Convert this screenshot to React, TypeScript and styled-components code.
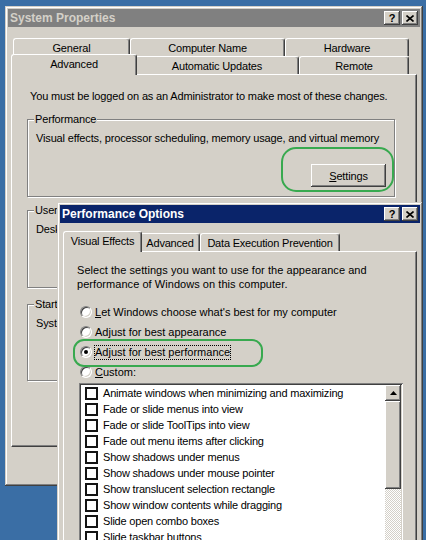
import React from 'react';
import styled, { createGlobalStyle, css } from 'styled-components';

const FACE = '#d4d0c8';
const SHADOW = '#808080';
const DARK = '#404040';
const MARK = '#38a94f';

const GlobalStyle = createGlobalStyle`
  html, body {
    margin: 0;
    padding: 0;
  }
  body {
    background: #3a6ea5;
    font-family: "Liberation Sans", Arial, sans-serif;
    font-size: 11px;
    color: #000;
  }
  * {
    box-sizing: border-box;
  }
`;

const raised = css`
  box-shadow: inset -1px -1px ${DARK}, inset 1px 1px #fff,
    inset -2px -2px ${SHADOW}, inset 2px 2px ${FACE};
`;

const Desktop = styled.div`
  position: relative;
  width: 426px;
  height: 540px;
  overflow: hidden;
  background: #3a6ea5;
`;

// windows sit at their place on the desktop
const Window = styled.div<{ $x: number; $y: number; $w: number; $h: number; $z: number; $ls: number }>`
  position: absolute;
  z-index: ${(p) => p.$z};
  left: ${(p) => p.$x}px;
  top: ${(p) => p.$y}px;
  width: ${(p) => p.$w}px;
  height: ${(p) => p.$h}px;
  padding: 3px;
  background: ${FACE};
  letter-spacing: ${(p) => p.$ls}px;
  box-shadow: inset -1px -1px ${DARK}, inset 1px 1px ${FACE},
    inset -2px -2px ${SHADOW}, inset 2px 2px #fff;
  display: flex;
  flex-direction: column;
`;

const TitleBar = styled.div<{ $active?: boolean }>`
  flex: none;
  height: 18px;
  display: flex;
  align-items: center;
  justify-content: space-between;
  padding: 0 2px;
  background: ${(p) => (p.$active ? '#0a246a' : SHADOW)};
  color: ${(p) => (p.$active ? '#fff' : FACE)};
  font-weight: bold;
  font-size: 12px;
  letter-spacing: 0;
  white-space: nowrap;
`;

const CaptionButtons = styled.div`
  display: flex;
  gap: 2px;
`;

const CaptionButton = styled.div`
  width: 16px;
  height: 14px;
  background: ${FACE};
  ${raised};
  display: flex;
  align-items: center;
  justify-content: center;
  color: #000;
  font-weight: bold;
  font-size: 11px;
  line-height: 1;
`;

const DialogBody = styled.div<{ $top: number }>`
  flex: 1;
  display: flex;
  flex-direction: column;
  padding: ${(p) => p.$top}px 3px 0;
`;

const TabRow = styled.div`
  flex: none;
  display: flex;
  height: 18px;
  padding-left: 2px;
`;

const Tab = styled.div<{ $w: number; $active?: boolean }>`
  flex: none;
  width: ${(p) => p.$w}px;
  height: 18px;
  background: ${FACE};
  border: 1px solid #fff;
  border-bottom: none;
  border-right-color: ${DARK};
  border-radius: 3px 3px 0 0;
  box-shadow: inset -1px 0 ${SHADOW};
  display: flex;
  align-items: center;
  justify-content: center;
  white-space: nowrap;
  ${(p) =>
    p.$active &&
    css`
      position: relative;
      z-index: 2;
      width: ${p.$w + 4}px;
      height: 21px;
      margin: -2px -2px -1px;
      padding-bottom: 3px;
    `}
`;

const TabPanel = styled.div<{ $h: number }>`
  flex: none;
  position: relative;
  z-index: 1;
  height: ${(p) => p.$h}px;
  background: ${FACE};
  border: 1px solid #fff;
  border-right-color: ${DARK};
  border-bottom-color: ${DARK};
  box-shadow: inset -1px -1px ${SHADOW};
`;

const AdvancedPage = styled.div`
  padding: 14px 21px 0 15px;
`;

const Notice = styled.p`
  margin: 0 0 0 3px;
  line-height: 14px;
  white-space: nowrap;
`;

const GroupBox = styled.fieldset<{ $mt: number }>`
  margin: ${(p) => p.$mt}px 0 0;
  padding: 0;
  min-width: 0;
  border: 1px solid ${SHADOW};
  box-shadow: inset 1px 1px #fff, 1px 1px #fff;
`;

const GroupTitle = styled.legend`
  margin-left: 6px;
  padding: 0 1px;
  line-height: 14px;
  background: ${FACE};
`;

const GroupContent = styled.div`
  padding: 5px 8px 9px 8px;
`;

const GroupText = styled.div`
  line-height: 14px;
  white-space: nowrap;
`;

const ButtonRow = styled.div<{ $mt: number }>`
  display: flex;
  justify-content: flex-end;
  gap: 6px;
  margin-top: ${(p) => p.$mt}px;
`;

const PushButton = styled.button`
  width: 75px;
  height: 23px;
  padding: 0;
  border: none;
  background: ${FACE};
  ${raised};
  font-family: inherit;
  font-size: 11px;
  letter-spacing: inherit;
  color: #000;
`;

const VisualPage = styled.div`
  padding: 11px 13px 0 13px;
`;

const Intro = styled.p`
  margin: 0;
  line-height: 14px;
  letter-spacing: 0.05px;
  white-space: nowrap;
`;

const RadioGroup = styled.div`
  margin-top: 11px;
`;

const RadioRow = styled.div`
  height: 20px;
  display: flex;
  align-items: center;
  gap: 2px;
  padding-left: 3px;
`;

const RadioDot = styled.span<{ $on?: boolean }>`
  flex: none;
  width: 12px;
  height: 12px;
  border-radius: 50%;
  background: #fff;
  border: 1px solid;
  border-color: ${SHADOW} #fff #fff ${SHADOW};
  box-shadow: inset 1px 1px ${DARK}, inset -1px -1px ${FACE};
  display: flex;
  align-items: center;
  justify-content: center;
  &::after {
    content: '';
    width: 4px;
    height: 4px;
    border-radius: 50%;
    background: ${(p) => (p.$on ? '#000' : 'transparent')};
  }
`;

const RadioLabel = styled.span<{ $focus?: boolean }>`
  padding: 1px;
  line-height: 13px;
  letter-spacing: 0;
  white-space: nowrap;
  outline: ${(p) => (p.$focus ? '1px dotted #000' : 'none')};
  outline-offset: -1px;
`;

const Key = styled.u`
  text-decoration: underline;
`;

const ListBox = styled.div`
  margin: 1px 0 0 2px;
  height: 200px;
  display: flex;
  padding: 2px;
  background: #fff;
  box-shadow: inset 1px 1px ${SHADOW}, inset -1px -1px #fff,
    inset 2px 2px ${DARK}, inset -2px -2px ${FACE};
`;

const ListItems = styled.div`
  flex: 1;
  overflow: hidden;
`;

const ListRow = styled.div`
  height: 16px;
  display: flex;
  align-items: center;
  gap: 5px;
  padding-left: 4px;
  white-space: nowrap;
`;

const Check = styled.span`
  flex: none;
  width: 13px;
  height: 13px;
  border: 2px solid #141414;
  background: #fff;
`;

const ScrollBar = styled.div`
  flex: none;
  width: 16px;
  display: flex;
  flex-direction: column;
`;

const ScrollButton = styled.div`
  flex: none;
  height: 16px;
  background: ${FACE};
  ${raised};
  display: flex;
  align-items: center;
  justify-content: center;
`;

const ScrollThumb = styled.div`
  flex: none;
  height: 88px;
  background: ${FACE};
  ${raised};
`;

const ScrollTrack = styled.div`
  flex: 1;
  background: repeating-conic-gradient(#fff 0 25%, ${FACE} 0 50%) 0 0 / 2px 2px;
`;

// green hand-drawn marks lying over the dialogs
const Mark = styled.div<{ $x: number; $y: number; $w: number; $h: number; $r: number }>`
  position: absolute;
  z-index: 10;
  left: ${(p) => p.$x}px;
  top: ${(p) => p.$y}px;
  width: ${(p) => p.$w}px;
  height: ${(p) => p.$h}px;
  border: 2.5px solid ${MARK};
  border-radius: ${(p) => p.$r}px;
  pointer-events: none;
`;

function Caption({ title, active }: { title: string; active?: boolean }) {
  return (
    <TitleBar $active={active}>
      <span>{title}</span>
      <CaptionButtons>
        <CaptionButton>?</CaptionButton>
        <CaptionButton>
          <svg width="8" height="7" viewBox="0 0 8 7">
            <path d="M0.5 0.5 L7.5 6.5 M7.5 0.5 L0.5 6.5" stroke="#000" strokeWidth="1.6" />
          </svg>
        </CaptionButton>
      </CaptionButtons>
    </TitleBar>
  );
}

const effects = [
  'Animate windows when minimizing and maximizing',
  'Fade or slide menus into view',
  'Fade or slide ToolTips into view',
  'Fade out menu items after clicking',
  'Show shadows under menus',
  'Show shadows under mouse pointer',
  'Show translucent selection rectangle',
  'Show window contents while dragging',
  'Slide open combo boxes',
  'Slide taskbar buttons',
  'Smooth edges of screen fonts',
  'Smooth-scroll list boxes',
];

export default function App() {
  return (
    <Desktop>
      <GlobalStyle />

      <Window $x={5} $y={6} $w={418} $h={480} $z={1} $ls={-0.15}>
        <Caption title="System Properties" />
        <DialogBody $top={11}>
          <TabRow>
            <Tab $w={117}>General</Tab>
            <Tab $w={155}>Computer Name</Tab>
            <Tab $w={124}>Hardware</Tab>
          </TabRow>
          <TabRow>
            <Tab $w={122} $active>
              Advanced
            </Tab>
            <Tab $w={164}>Automatic Updates</Tab>
            <Tab $w={110}>Remote</Tab>
          </TabRow>
          <TabPanel $h={373}>
            <AdvancedPage>
              <Notice>You must be logged on as an Administrator to make most of these changes.</Notice>
              <GroupBox $mt={9}>
                <GroupTitle>Performance</GroupTitle>
                <GroupContent>
                  <GroupText>Visual effects, processor scheduling, memory usage, and virtual memory</GroupText>
                  <ButtonRow $mt={19}>
                    <PushButton>
                      <Key>S</Key>ettings
                    </PushButton>
                  </ButtonRow>
                </GroupContent>
              </GroupBox>
              <GroupBox $mt={6}>
                <GroupTitle>User Profiles</GroupTitle>
                <GroupContent>
                  <GroupText>Desktop settings related to your logon</GroupText>
                  <ButtonRow $mt={19}>
                    <PushButton>
                      S<Key>e</Key>ttings
                    </PushButton>
                  </ButtonRow>
                </GroupContent>
              </GroupBox>
              <GroupBox $mt={9}>
                <GroupTitle>Startup and Recovery</GroupTitle>
                <GroupContent>
                  <GroupText>System startup, system failure, and debugging information</GroupText>
                  <ButtonRow $mt={18}>
                    <PushButton>
                      Se<Key>t</Key>tings
                    </PushButton>
                  </ButtonRow>
                </GroupContent>
              </GroupBox>
            </AdvancedPage>
          </TabPanel>
        </DialogBody>
      </Window>

      <Window $x={57} $y={202} $w={366} $h={380} $z={2} $ls={-0.2}>
        <Caption title="Performance Options" active />
        <DialogBody $top={10}>
          <TabRow>
            <Tab $w={75} $active>
              Visual Effects
            </Tab>
            <Tab $w={60}>Advanced</Tab>
            <Tab $w={140}>Data Execution Prevention</Tab>
          </TabRow>
          <TabPanel $h={330}>
            <VisualPage>
              <Intro>
                Select the settings you want to use for the appearance and
                <br />
                performance of Windows on this computer.
              </Intro>
              <RadioGroup>
                <RadioRow>
                  <RadioDot />
                  <RadioLabel>
                    <Key>L</Key>et Windows choose what's best for my computer
                  </RadioLabel>
                </RadioRow>
                <RadioRow>
                  <RadioDot />
                  <RadioLabel>Adjust for best appearance</RadioLabel>
                </RadioRow>
                <RadioRow>
                  <RadioDot $on />
                  <RadioLabel $focus>Adjust for best performance</RadioLabel>
                </RadioRow>
                <RadioRow>
                  <RadioDot />
                  <RadioLabel>
                    <Key>C</Key>ustom:
                  </RadioLabel>
                </RadioRow>
              </RadioGroup>
              <ListBox>
                <ListItems>
                  {effects.map((e) => (
                    <ListRow key={e}>
                      <Check />
                      {e}
                    </ListRow>
                  ))}
                </ListItems>
                <ScrollBar>
                  <ScrollButton>
                    <svg width="7" height="4" viewBox="0 0 7 4">
                      <path d="M3.5 0 L7 4 L0 4 Z" fill="#000" />
                    </svg>
                  </ScrollButton>
                  <ScrollThumb />
                  <ScrollTrack />
                </ScrollBar>
              </ListBox>
            </VisualPage>
          </TabPanel>
        </DialogBody>
      </Window>

      <Mark $x={281} $y={147} $w={113} $h={45} $r={15} />
      <Mark $x={73} $y={339} $w={190} $h={28} $r={11} />
    </Desktop>
  );
}
